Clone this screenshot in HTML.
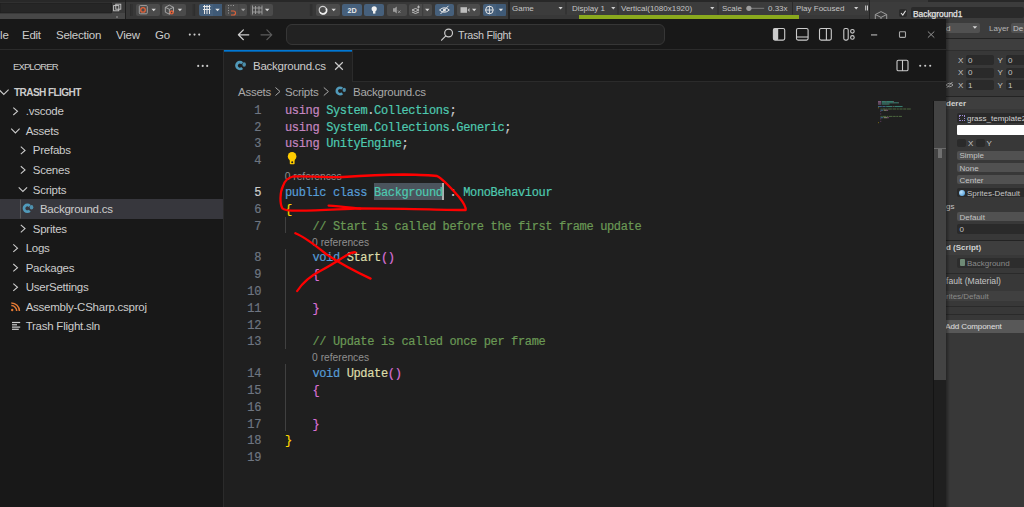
<!DOCTYPE html>
<html><head><meta charset="utf-8">
<style>
*{box-sizing:border-box;margin:0;padding:0}
html,body{width:1024px;height:507px;overflow:hidden;background:#383838;font-family:"Liberation Sans",sans-serif}
.a{position:absolute;white-space:pre}
#unity{position:absolute;left:0;top:0;width:1024px;height:507px;background:#383838}
#vs{position:absolute;left:0;top:19px;width:946px;height:488px;background:#181818;overflow:hidden}
.ui{font-size:11.5px;letter-spacing:-0.25px;line-height:14px;color:#cccccc}
.code{font-family:"Liberation Mono",monospace;font-size:12px;letter-spacing:-0.35px;-webkit-text-stroke:0.2px;line-height:16.8px;height:16.8px}
.ln{color:#6e7681;text-align:right;width:40px;left:221px}
.dim{color:#cccccc}.kw{color:#569cd6}.ctl{color:#c586c0}.ty{color:#4ec9b0}.cm{color:#6a9955}.fn{color:#dcdcaa}.pu{color:#cccccc}
.b1{color:#ffd700}.b2{color:#da70d6}
.lens{font-size:10.25px;color:#8f8f8f;font-family:"Liberation Sans",sans-serif}
.u{font-size:8px;color:#c4c4c4}
.btn{position:absolute;top:4px;height:12px;background:#4b4b4b;border-radius:2px}
.blue{background:#46607c}
.fld{position:absolute;background:#2a2a2a;border-radius:2px}
.dd{position:absolute;background:#515151;border-radius:2px}
</style></head><body>
<div id="unity">
  <!-- top toolbar -->
  <div class="a" style="left:0;top:0;width:1024px;height:2px;background:#282828"></div>
  <div class="a" style="left:0;top:2px;width:126px;height:17px;background:#3a3a3a"></div>
  <div class="a" style="left:0;top:3px;width:112px;height:10px;background:#262626"></div>
  <div class="a" style="left:0;top:13px;width:125px;height:6px;background:#474747"></div>
  <div class="a" style="left:125px;top:0;width:1px;height:19px;background:#1e1e1e"></div>
  <div class="a" style="left:126px;top:2px;width:744px;height:17px;background:#383838"></div>
  <div class="btn" style="left:136px;width:24px"></div>
  <div class="btn" style="left:162px;width:24px"></div>
  <div class="btn blue" style="left:199px;width:23px"></div>
  <div class="btn" style="left:225px;width:22px"></div>
  <div class="btn" style="left:250px;width:23px"></div>
  <div class="btn" style="left:316px;width:24px"></div>
  <div class="btn blue" style="left:342px;width:20px"></div>
  <div class="btn blue" style="left:364px;width:20px"></div>
  <div class="btn" style="left:387px;width:20px"></div>
  <div class="btn" style="left:409px;width:23px"></div>
  <div class="btn blue" style="left:435px;width:19px"></div>
  <div class="btn" style="left:457px;width:23px"></div>
  <div class="btn blue" style="left:483px;width:23px"></div>
  <div class="a" style="left:508px;top:0;width:2px;height:19px;background:#232323"></div>
  <div class="a" style="left:510px;top:2px;width:360px;height:13px;background:#3c3c3c"></div>
  <div class="a u" style="left:512px;top:4px">Game</div>
  <div class="a u" style="left:572px;top:4px">Display 1</div>
  <div class="a u" style="left:621px;top:4px">Vertical(1080x1920)</div>
  <div class="a u" style="left:722px;top:4px">Scale</div>
  <div class="a u" style="left:768px;top:4px">0.33x</div>
  <div class="a u" style="left:796px;top:4px">Play Focused</div>
  <div class="a" style="left:579px;top:15px;width:220px;height:4px;background:#8aa91d"></div>
  <!-- inspector -->
  <div class="a" style="left:870px;top:0;width:154px;height:507px;background:#383838"></div>
  <div class="a" style="left:928px;top:0;width:96px;height:2px;background:#282828"></div>
  <div class="a" style="left:870px;top:2px;width:154px;height:36px;background:#3c3c3c"></div>
  <div class="a" style="left:869px;top:0;width:1px;height:507px;background:#232323"></div>
  <div class="fld" style="left:899px;top:9px;width:8px;height:8px"></div>
  <div class="fld" style="left:911px;top:7px;width:113px;height:11px"></div>
  <div class="a u" style="left:913px;top:8.5px;color:#e4e4e4;font-size:8.4px;-webkit-text-stroke:0.25px #e4e4e4">Background1</div>
  <div class="dd" style="left:900px;top:23px;width:80px;height:10px"></div><svg class="a" style="left:972px;top:26px" width="8" height="4"><path d="M0.6 0.3 H5.2 L2.9 2.8Z" fill="#d6d6d6"/></svg>
  <div class="a u" style="left:946px;top:24px">d</div>
  <div class="a u" style="left:989px;top:24px;color:#b4b4b4">Layer</div>
  <div class="dd" style="left:1011px;top:23px;width:20px;height:10px"></div>
  <div class="a u" style="left:1013px;top:24px">De</div>
  <div class="a" style="left:870px;top:37.5px;width:154px;height:1px;background:#232323"></div>
  <div class="a" style="left:870px;top:38.5px;width:154px;height:11px;background:#3e3e3e"></div>
  <div class="a" style="left:870px;top:49.5px;width:154px;height:1px;background:#2e2e2e"></div>
  <div class="a u" style="left:958px;top:55.5px">X</div><div class="fld" style="left:966px;top:54.7px;width:28px;height:10.5px"></div><div class="a u" style="left:968px;top:55.5px">0</div>
  <div class="a u" style="left:997.5px;top:55.5px">Y</div><div class="fld" style="left:1006px;top:54.7px;width:28px;height:10.5px"></div><div class="a u" style="left:1008px;top:55.5px">0</div>
  <div class="a u" style="left:958px;top:68px">X</div><div class="fld" style="left:966px;top:67.5px;width:28px;height:10.5px"></div><div class="a u" style="left:968px;top:68px">0</div>
  <div class="a u" style="left:997.5px;top:68px">Y</div><div class="fld" style="left:1006px;top:67.5px;width:28px;height:10.5px"></div><div class="a u" style="left:1008px;top:68px">0</div>
  <div class="a u" style="left:958px;top:80.5px">X</div><div class="fld" style="left:966px;top:79.7px;width:28px;height:10.5px"></div><div class="a u" style="left:968px;top:80.5px">1</div>
  <div class="a u" style="left:997.5px;top:80.5px">Y</div><div class="fld" style="left:1006px;top:79.7px;width:28px;height:10.5px"></div><div class="a u" style="left:1008px;top:80.5px">1</div>
  <svg class="a" style="left:945px;top:81px" width="9" height="8"><path d="M1 4 Q4.5 0.5 8 4 Q4.5 7.5 1 4Z M1.5 7 L7.5 1" fill="none" stroke="#a8a8a8" stroke-width="0.9"/></svg>
  <div class="a" style="left:870px;top:95.5px;width:154px;height:1px;background:#232323"></div>
  <div class="a" style="left:870px;top:96.5px;width:154px;height:12px;background:#3e3e3e"></div>
  <div class="a u" style="left:946px;top:99px;font-weight:bold;color:#d2d2d2">derer</div>
  <div class="fld" style="left:957.3px;top:113.3px;width:70px;height:10.2px"></div>
  <div class="a" style="left:958.5px;top:115px;width:6px;height:6px;border:1px dotted #9a8ad0"></div>
  <div class="a u" style="left:967px;top:114px;color:#d2d2d2">grass_template2</div>
  <div class="a" style="left:957.3px;top:125.4px;width:70px;height:9.7px;background:#ffffff;border-radius:1px"></div>
  <div class="fld" style="left:957.3px;top:138.7px;width:8.5px;height:8.3px"></div><div class="a u" style="left:968px;top:139px">X</div>
  <div class="fld" style="left:976px;top:138.7px;width:8.5px;height:8.3px"></div><div class="a u" style="left:986.5px;top:139px">Y</div>
  <div class="dd" style="left:957.3px;top:150.5px;width:70px;height:9px"></div><div class="a u" style="left:959.5px;top:151px">Simple</div>
  <div class="dd" style="left:957.3px;top:163px;width:70px;height:9px"></div><div class="a u" style="left:959.5px;top:163.5px">None</div>
  <div class="dd" style="left:957.3px;top:175.4px;width:70px;height:9px"></div><div class="a u" style="left:959.5px;top:176px">Center</div>
  <div class="fld" style="left:957.3px;top:187.8px;width:70px;height:9.5px"></div>
  <div class="a" style="left:959px;top:189.5px;width:6px;height:6px;border-radius:3px;background:radial-gradient(circle at 35% 35%,#bfe4ff,#3a8fd0)"></div>
  <div class="a u" style="left:967px;top:188.5px">Sprites-Default</div>
  <div class="a u" style="left:946px;top:202px">gs</div>
  <div class="dd" style="left:957.3px;top:211.9px;width:70px;height:9.6px"></div><div class="a u" style="left:959.5px;top:212.5px">Default</div>
  <div class="fld" style="left:957.3px;top:224.3px;width:70px;height:9.7px"></div><div class="a u" style="left:959.5px;top:225px">0</div>
  <div class="a" style="left:870px;top:239.5px;width:154px;height:1px;background:#232323"></div>
  <div class="a" style="left:870px;top:240.5px;width:154px;height:14px;background:#3e3e3e"></div>
  <div class="a u" style="left:946px;top:242.7px;font-weight:bold;color:#d2d2d2">d (Script)</div>
  <div class="fld" style="left:957.3px;top:257.5px;width:70px;height:10px;background:#2d2d2d"></div>
  <div class="a" style="left:959.5px;top:259px;width:5.5px;height:7px;background:#6f8a76;border-radius:1px"></div>
  <div class="a u" style="left:967px;top:258.5px;color:#8a8a8a">Background</div>
  <div class="a" style="left:870px;top:272.5px;width:154px;height:1px;background:#2a2a2a"></div>
  <div class="a u" style="left:946px;top:276.3px;font-size:8.6px;color:#c4c4c4">fault (Material)</div>
  <div class="a" style="left:870px;top:290.7px;width:154px;height:10.3px;background:#404040"></div>
  <div class="a u" style="left:946px;top:291.5px;color:#8a8a8a">rites/Default</div>
  <div class="a" style="left:870px;top:306px;width:154px;height:1px;background:#2a2a2a"></div>
  <div class="a" style="left:870px;top:313.5px;width:154px;height:1px;background:#2a2a2a"></div>
  <div class="a" style="left:943px;top:320.2px;width:90px;height:12.8px;background:#585858;border-radius:3px"></div>
  <div class="a u" style="left:945.2px;top:322.2px;color:#e0e0e0;font-size:8px;letter-spacing:-0.1px">Add Component</div>
<svg class="a" style="left:0;top:0" width="1024" height="20" viewBox="0 0 1024 20"><rect x="0" y="3" width="111.5" height="10" fill="#262626" stroke="#1c1c1c" stroke-width="0.6"/><g fill="none" stroke="#c8c8c8" stroke-width="0.9"><rect x="113.6" y="5.6" width="5.2" height="5.2"/><rect x="115.8" y="4.2" width="5" height="5" /></g><circle cx="117" cy="17" r="0.7" fill="#bdbdbd"/><line x1="130.5" y1="4" x2="130.5" y2="16" stroke="#2c2c2c" stroke-width="0.8"/><line x1="132" y1="4" x2="132" y2="16" stroke="#2c2c2c" stroke-width="0.8"/><line x1="193.1" y1="4" x2="193.1" y2="16" stroke="#2c2c2c" stroke-width="0.8"/><line x1="194.6" y1="4" x2="194.6" y2="16" stroke="#2c2c2c" stroke-width="0.8"/><line x1="310.3" y1="4" x2="310.3" y2="16" stroke="#2c2c2c" stroke-width="0.8"/><line x1="311.8" y1="4" x2="311.8" y2="16" stroke="#2c2c2c" stroke-width="0.8"/><rect x="139.3" y="5.6" width="8" height="8.2" rx="1" fill="none" stroke="#a8a8a8" stroke-width="0.9"/><circle cx="143" cy="9.9" r="2.3" fill="none" stroke="#e0623a" stroke-width="1.3"/><path d="M151.50 8.80 H155.90 L153.70 11.30 Z" fill="#d6d6d6"/><g fill="none" stroke="#b0b0b0" stroke-width="0.9"><path d="M165.3 7.3 L169.4 5.2 L173.5 7.3 L173.5 12.2 L169.4 14.2 L165.3 12.2 Z M165.3 7.3 L169.4 9.3 L173.5 7.3 M169.4 9.3 V14.2"/></g><circle cx="171.7" cy="12.4" r="2.1" fill="#e0623a"/><path d="M171.1 11.4 L172.7 12.4 L171.1 13.4Z" fill="#3a3a3a"/><path d="M177.70 8.80 H182.10 L179.90 11.30 Z" fill="#d6d6d6"/><rect x="213" y="4" width="9" height="12" fill="#3f5a77"/><g stroke="#e6e6e6" stroke-width="1"><line x1="203" y1="6.5" x2="210.5" y2="6.5"/><line x1="203" y1="9.5" x2="210.5" y2="9.5"/><line x1="204.5" y1="5" x2="204.5" y2="14"/><line x1="207" y1="5" x2="207" y2="14"/><line x1="209.5" y1="5" x2="209.5" y2="14"/></g><path d="M215.30 8.80 H219.70 L217.50 11.30 Z" fill="#e6e6e6"/><g fill="#9a9a9a"><rect x="228" y="5" width="1" height="1"/><rect x="230.5" y="5" width="1" height="1"/><rect x="233" y="5" width="1" height="1"/><rect x="228" y="7.5" width="1" height="1"/><rect x="228" y="10" width="1" height="1"/><rect x="228" y="12.5" width="1" height="1"/></g><path d="M231 11 H233.5 A2 2 0 0 1 233.5 15 H231" fill="none" stroke="#e0623a" stroke-width="1.1"/><line x1="238.8" y1="4" x2="238.8" y2="16" stroke="#424242" stroke-width="0.6"/><path d="M241.00 8.80 H245.40 L243.20 11.30 Z" fill="#9c9c9c"/><g stroke="#a0a0a0" stroke-width="0.9" fill="none"><line x1="252.5" y1="5.5" x2="252.5" y2="14.5"/><line x1="262" y1="5.5" x2="262" y2="14.5"/><line x1="252.5" y1="8" x2="262" y2="8"/><line x1="252.5" y1="12" x2="262" y2="12"/><line x1="255.5" y1="6" x2="255.5" y2="14"/><line x1="259" y1="6" x2="259" y2="14"/></g><path d="M265.00 8.80 H269.40 L267.20 11.30 Z" fill="#d6d6d6"/><circle cx="322.8" cy="10" r="3.6" fill="none" stroke="#d0d0d0" stroke-width="1.2"/><path d="M320 12.2 A3.6 3.6 0 0 0 326.2 8.5" fill="none" stroke="#f0f0f0" stroke-width="1.6"/><path d="M331.50 8.80 H335.90 L333.70 11.30 Z" fill="#d6d6d6"/><text x="352" y="13" font-family="Liberation Sans" font-weight="bold" font-size="7.2" fill="#e8e8e8" text-anchor="middle">2D</text><circle cx="374.2" cy="8.8" r="2.6" fill="#f0f0f0"/><rect x="373" y="11" width="2.4" height="2.6" fill="#f0f0f0"/><path d="M393 8.2 H394.6 L396.8 6.5 V13.5 L394.6 11.8 H393Z" fill="#9c9c9c"/><path d="M398 10.5 L400.5 13 M400.5 10.5 L398 13" stroke="#9c9c9c" stroke-width="0.8"/><g fill="none" stroke="#c8c8c8" stroke-width="0.9"><path d="M412 10 L415.5 8.5 L419 10 L415.5 11.5Z"/><path d="M412 12 L415.5 13.5 L419 12"/></g><path d="M418.5 5.5 V8.5 M417 7 H420" stroke="#c8c8c8" stroke-width="0.8"/><line x1="422.7" y1="4" x2="422.7" y2="16" stroke="#383838" stroke-width="0.8"/><path d="M425.10 8.80 H429.50 L427.30 11.30 Z" fill="#d6d6d6"/><path d="M439.5 10 Q444.4 5.5 449.3 10 Q444.4 14.5 439.5 10Z" fill="none" stroke="#e8e8e8" stroke-width="1"/><circle cx="444.4" cy="10" r="1.5" fill="#e8e8e8"/><line x1="440.5" y1="14" x2="448.5" y2="5.8" stroke="#e8e8e8" stroke-width="1"/><rect x="460.5" y="7.2" width="6.5" height="5.6" fill="#bdbdbd"/><path d="M467.5 10 L469.5 8 V12Z" fill="#bdbdbd"/><path d="M472.00 8.80 H476.40 L474.20 11.30 Z" fill="#d6d6d6"/><rect x="496.2" y="4" width="9.4" height="12" fill="#3f5a77"/><circle cx="489.4" cy="10" r="3.8" fill="none" stroke="#e8e8e8" stroke-width="1"/><line x1="485.6" y1="10" x2="493.2" y2="10" stroke="#e8e8e8" stroke-width="0.9"/><line x1="489.4" y1="6.2" x2="489.4" y2="13.8" stroke="#e8e8e8" stroke-width="0.9"/><path d="M498.70 8.80 H503.10 L500.90 11.30 Z" fill="#e6e6e6"/><path d="M558.50 7.10 H562.70 L560.60 9.50 Z" fill="#cfcfcf"/><path d="M611.20 7.10 H615.40 L613.30 9.50 Z" fill="#cfcfcf"/><path d="M710.20 7.10 H714.40 L712.30 9.50 Z" fill="#cfcfcf"/><path d="M854.10 7.10 H858.30 L856.20 9.50 Z" fill="#cfcfcf"/><line x1="566" y1="2" x2="566" y2="14.5" stroke="#2a2a2a" stroke-width="1"/><line x1="618" y1="2" x2="618" y2="14.5" stroke="#2a2a2a" stroke-width="1"/><line x1="718" y1="2" x2="718" y2="14.5" stroke="#2a2a2a" stroke-width="1"/><line x1="792.5" y1="2" x2="792.5" y2="14.5" stroke="#2a2a2a" stroke-width="1"/><line x1="749" y1="8.3" x2="764.2" y2="8.3" stroke="#8a8a8a" stroke-width="0.8"/><circle cx="748.9" cy="8.3" r="2.6" fill="#9e9e9e"/><rect x="865.2" y="5.5" width="1" height="5" fill="#d0d0d0"/><rect x="867" y="5.5" width="1" height="5" fill="#d0d0d0"/><g fill="none" stroke="#9c9c9c" stroke-width="1"><path d="M875.3 14.5 L881 11.6 L886.7 14.5 L886.7 20 M875.3 14.5 V20 M875.3 14.5 L881 17.4 L886.7 14.5 M881 17.4 V20"/></g><path d="M901 13 L902.8 15 L905.6 10.8" fill="none" stroke="#e0e0e0" stroke-width="1.1"/></svg>
</div>

<div class="a" style="left:946px;top:19px;width:4px;height:488px;background:linear-gradient(90deg,rgba(0,0,0,0.35),rgba(0,0,0,0))"></div>
<div id="vs">
  <!-- title bar -->
  <div class="a" style="left:0;top:30px;width:946px;height:1px;background:#2b2b2b"></div>
  <div class="a ui" style="left:-9px;top:9px">File</div>
  <div class="a ui" style="left:22px;top:9px">Edit</div>
  <div class="a ui" style="left:56px;top:9px">Selection</div>
  <div class="a ui" style="left:116px;top:9px">View</div>
  <div class="a ui" style="left:155px;top:9px">Go</div>
  <div class="a" style="left:286px;top:5px;width:379px;height:21px;border:1px solid #363636;background:#222222;border-radius:6px"></div>
  <div class="a ui" style="left:458px;top:9px;font-size:10.8px;letter-spacing:-0.3px">Trash Flight</div>

  <!-- sidebar -->
  <div class="a" style="left:0;top:31px;width:223px;height:457px;background:#181818"></div>
  <div class="a" style="left:223px;top:31px;width:1px;height:457px;background:#2b2b2b"></div>
  <div class="a ui" style="left:13px;top:41.00px;font-size:9.6px;letter-spacing:-0.95px">EXPLORER</div>
<div class="a ui" style="left:14px;top:67.30px;font-size:10.1px;font-weight:bold;letter-spacing:-0.6px">TRASH FLIGHT</div>
<div class="a ui" style="left:25.70px;top:85.30px">.vscode</div>
<div class="a ui" style="left:25.70px;top:104.85px">Assets</div>
<div class="a ui" style="left:32.80px;top:124.40px">Prefabs</div>
<div class="a ui" style="left:32.80px;top:143.95px">Scenes</div>
<div class="a ui" style="left:32.80px;top:163.50px">Scripts</div>
<div class="a" style="left:0;top:180.25px;width:222.5px;height:19.6px;background:#37373d"></div>
<div class="a ui" style="left:39.90px;top:183.05px">Background.cs</div>
<div class="a ui" style="left:32.80px;top:202.60px">Sprites</div>
<div class="a ui" style="left:25.70px;top:222.15px">Logs</div>
<div class="a ui" style="left:25.70px;top:241.70px">Packages</div>
<div class="a ui" style="left:25.70px;top:261.25px">UserSettings</div>
<div class="a ui" style="left:25.70px;top:280.80px">Assembly-CSharp.csproj</div>
<div class="a ui" style="left:25.70px;top:300.35px">Trash Flight.sln</div>

  <!-- editor -->
  <div class="a" style="left:224px;top:31px;width:722px;height:457px;background:#1f1f1f"></div>
  <div class="a" style="left:352px;top:31px;width:594px;height:32px;background:#181818;border-bottom:1px solid #2b2b2b;border-left:1px solid #2b2b2b"></div>
  <div class="a" style="left:224px;top:31px;width:128px;height:1px;background:#0078d4"></div><div class="a" style="left:224px;top:32px;width:128px;height:1px;background:#0a5a99"></div>
  <div class="a ui" style="left:253px;top:40px">Background.cs</div>
  <div class="a ui" style="left:238px;top:66px;color:#a9a9a9">Assets</div>
  <div class="a ui" style="left:285px;top:66px;color:#a9a9a9">Scripts</div>
  <div class="a ui" style="left:353px;top:66px;color:#a9a9a9">Background.cs</div>

  <!-- scrollbar -->
  <div class="a" style="left:933px;top:82px;width:1px;height:406px;background:#141414"></div>
  <div class="a" style="left:934px;top:82px;width:12px;height:279px;background:#434343"></div>
  <div class="a" style="left:934px;top:128.5px;width:12px;height:1.6px;background:#6a6a6a"></div>
  <div class="a" style="left:938px;top:130px;width:4px;height:8.8px;background:#707070"></div>
  <div class="a" style="left:374.05px;top:164.10px;width:68.50px;height:16.8px;background:#4b545d"></div>
<div class="a" style="left:442.05px;top:164.10px;width:2px;height:16.8px;background:#aeafad"></div>
<div class="a" style="left:285.00px;top:197.70px;width:1px;height:16.80px;background:#404040"></div>
<div class="a" style="left:285.00px;top:229.50px;width:1px;height:100.80px;background:#404040"></div>
<div class="a" style="left:285.00px;top:345.30px;width:1px;height:67.20px;background:#404040"></div>
<div class="a code ln" style="top:83.70px">1</div>
<div class="a code" style="left:285.0px;top:83.70px"><span class="ctl">using</span><span class="pu"> </span><span class="ty">System</span><span class="pu">.</span><span class="ty">Collections</span><span class="pu">;</span></div>
<div class="a code ln" style="top:100.50px">2</div>
<div class="a code" style="left:285.0px;top:100.50px"><span class="ctl">using</span><span class="pu"> </span><span class="ty">System</span><span class="pu">.</span><span class="ty">Collections</span><span class="pu">.</span><span class="ty">Generic</span><span class="pu">;</span></div>
<div class="a code ln" style="top:117.30px">3</div>
<div class="a code" style="left:285.0px;top:117.30px"><span class="ctl">using</span><span class="pu"> </span><span class="ty">UnityEngine</span><span class="pu">;</span></div>
<div class="a code ln" style="top:134.10px">4</div>
<div class="a lens" style="left:284.70px;top:152.20px">0 references</div>
<div class="a code ln" style="top:165.90px;color:#cccccc">5</div>
<div class="a code" style="left:285.0px;top:165.90px"><span class="kw">public</span><span class="pu"> </span><span class="kw">class</span><span class="pu"> </span><span class="ty">Background</span><span class="pu"> </span><span class="dim">:</span><span class="pu"> </span><span class="ty">MonoBehaviour</span></div>
<div class="a code ln" style="top:182.70px">6</div>
<div class="a code" style="left:285.0px;top:182.70px"><span class="b1">{</span></div>
<div class="a code ln" style="top:199.50px">7</div>
<div class="a code" style="left:285.0px;top:199.50px"><span class="pu">    </span><span class="cm">// Start is called before the first frame update</span></div>
<div class="a lens" style="left:312.10px;top:217.60px">0 references</div>
<div class="a code ln" style="top:231.30px">8</div>
<div class="a code" style="left:285.0px;top:231.30px"><span class="pu">    </span><span class="kw">void</span><span class="pu"> </span><span class="fn">Start</span><span class="b2">()</span></div>
<div class="a code ln" style="top:248.10px">9</div>
<div class="a code" style="left:285.0px;top:248.10px"><span class="pu">    </span><span class="b2">{</span></div>
<div class="a code ln" style="top:264.90px">10</div>
<div class="a code ln" style="top:281.70px">11</div>
<div class="a code" style="left:285.0px;top:281.70px"><span class="pu">    </span><span class="b2">}</span></div>
<div class="a code ln" style="top:298.50px">12</div>
<div class="a code ln" style="top:315.30px">13</div>
<div class="a code" style="left:285.0px;top:315.30px"><span class="pu">    </span><span class="cm">// Update is called once per frame</span></div>
<div class="a lens" style="left:312.10px;top:333.40px">0 references</div>
<div class="a code ln" style="top:347.10px">14</div>
<div class="a code" style="left:285.0px;top:347.10px"><span class="pu">    </span><span class="kw">void</span><span class="pu"> </span><span class="fn">Update</span><span class="b2">()</span></div>
<div class="a code ln" style="top:363.90px">15</div>
<div class="a code" style="left:285.0px;top:363.90px"><span class="pu">    </span><span class="b2">{</span></div>
<div class="a code ln" style="top:380.70px">16</div>
<div class="a code ln" style="top:397.50px">17</div>
<div class="a code" style="left:285.0px;top:397.50px"><span class="pu">    </span><span class="b2">}</span></div>
<div class="a code ln" style="top:414.30px">18</div>
<div class="a code" style="left:285.0px;top:414.30px"><span class="b1">}</span></div>
<div class="a code ln" style="top:431.10px">19</div>
</div>

<svg class="a" style="left:0;top:0" width="1024" height="507" viewBox="0 0 1024 507"><path d="M242.19 63.18 A3.35 3.35 0 1 0 242.19 67.92" stroke="#519aba" stroke-width="2.70" fill="none"/><ellipse cx="244.15" cy="64.43" rx="1.77" ry="2.23" fill="#519aba" opacity="0.9"/><path d="M342.23 88.68 A3.20 3.20 0 1 0 342.23 93.22" stroke="#519aba" stroke-width="2.58" fill="none"/><ellipse cx="344.24" cy="89.88" rx="1.69" ry="2.14" fill="#519aba" opacity="0.9"/><path d="M29.75 205.91 A3.38 3.38 0 1 0 29.75 210.69" stroke="#519aba" stroke-width="2.73" fill="none"/><ellipse cx="31.53" cy="207.17" rx="1.79" ry="2.26" fill="#519aba" opacity="0.9"/><g fill="none" stroke="#e37933" stroke-width="1.5"><path d="M11.3 305.6 A5.4 5.4 0 0 1 16.7 311"/><path d="M11.3 302.9 A8.1 8.1 0 0 1 19.4 311"/></g><circle cx="12.2" cy="310" r="1.2" fill="#e37933"/><g stroke="#cfcfcf" stroke-width="1.2"><line x1="12" y1="322.5" x2="20.2" y2="322.5"/><line x1="12" y1="324.8" x2="17" y2="324.8"/><line x1="12" y1="327.1" x2="20.2" y2="327.1"/><line x1="12" y1="329.3" x2="18.8" y2="329.3"/></g><line x1="20.5" y1="199.5" x2="20.5" y2="218.5" stroke="#585858" stroke-width="1"/><g fill="#cccccc"><circle cx="189.8" cy="34.6" r="1.05"/><circle cx="194.5" cy="34.6" r="1.05"/><circle cx="199.2" cy="34.6" r="1.05"/></g><g fill="none" stroke-width="1.2" stroke-linecap="round" stroke-linejoin="round"><path d="M248.8 34.8 H238.4 M243.4 29.9 L238.4 34.8 L243.4 39.7" stroke="#cccccc"/><path d="M261 34.8 H271.8 M266.9 29.9 L271.8 34.8 L266.9 39.7" stroke="#5c5c5c"/></g><g fill="none" stroke="#cccccc" stroke-width="1.2"><circle cx="448.6" cy="33" r="3.9"/><line x1="445.8" y1="35.9" x2="441.6" y2="40.2" stroke-linecap="round"/></g><g fill="none" stroke="#cccccc" stroke-width="1.1"><rect x="773.4" y="28.5" width="11.3" height="11.6" rx="1.6"/><rect x="796.5" y="28.5" width="11.6" height="11.6" rx="1.6"/><line x1="796.5" y1="37" x2="808.1" y2="37"/><rect x="819.5" y="28.5" width="11.8" height="11.6" rx="1.6"/><line x1="826.4" y1="28.5" x2="826.4" y2="40.1"/><rect x="843.8" y="28.5" width="4.4" height="11.6" rx="1.6"/><circle cx="852.4" cy="31.3" r="1.8"/><circle cx="852.4" cy="37.4" r="1.8"/></g><rect x="773.4" y="28.5" width="4.8" height="11.6" rx="1" fill="#cccccc"/><line x1="871" y1="34.9" x2="877.2" y2="34.9" stroke="#9a9a9a" stroke-width="1.4"/><rect x="899.5" y="31.8" width="6" height="5.6" rx="0.8" fill="none" stroke="#a8a8a8" stroke-width="1.1"/><path d="M927.9 31.5 L934.3 37.6 M934.3 31.5 L927.9 37.6" stroke="#a0a0a0" stroke-width="0.9"/><path d="M335.1 62.3 L342.8 69.8 M342.8 62.3 L335.1 69.8" stroke="#cccccc" stroke-width="1.2"/><g fill="none" stroke="#a9a9a9" stroke-width="1"><polyline points="275.5,87.5 280,91.5 275.5,95.5"/><polyline points="323.8,87.5 328.4,91.5 323.8,95.5"/></g><rect x="897" y="60.2" width="11" height="10.6" rx="1.4" fill="none" stroke="#cccccc" stroke-width="1.1"/><line x1="902.5" y1="60.2" x2="902.5" y2="70.8" stroke="#cccccc" stroke-width="1.1"/><g fill="#cccccc"><circle cx="198.2" cy="65.9" r="1.05"/><circle cx="202.7" cy="65.9" r="1.05"/><circle cx="207.2" cy="65.9" r="1.05"/></g><g fill="#cccccc"><circle cx="920.2" cy="65.8" r="1.05"/><circle cx="925.2" cy="65.8" r="1.05"/><circle cx="930.2" cy="65.8" r="1.05"/></g></svg>
<svg class="a" style="left:0;top:0" width="1024" height="507" viewBox="0 0 1024 507">
  <!-- lightbulb -->
  <circle cx="292.1" cy="156.4" r="4.3" fill="#ffcc00"/>
  <rect x="289.8" y="159.5" width="4.8" height="4.7" rx="0.8" fill="#ffcc00"/>
  <circle cx="292.2" cy="162.2" r="1" fill="#1f1f1f"/>
  <!-- red annotations -->
  <g fill="none" stroke="#ff0000" stroke-width="2.3" stroke-linecap="round" stroke-linejoin="round">
    <path d="M465.7 210 C450 210 420 209 404 208.8 C385 208.6 370 208.4 360 208.3 C340 209 320 210.5 299 210.7 C290 210.8 284 210 282.5 208.5 C279.5 204 280 192 283 186 C284.5 181 287 178 293 176.5 C310 176.2 335 177.5 343 177 C360 175.8 385 174.6 404 174.5 C420 174.8 432 175.4 437 176 C443 179 452 189 459 197 C463 202 466 207 465.7 210"/>
    <path d="M328.6 205.6 C338 206 350 207.5 360.3 208.6"/>
    <path d="M295.4 233.3 C302 236 310 241 326 254 C338 262 350 269 370.6 278.6"/>
    <path d="M297.2 291 C303 282 310 276 322 270 C332 265 342 258 347 255 C350 253 353 252 355.4 252.3"/>
  </g>
</svg>
<svg class="a" style="left:0;top:0" width="230" height="507"><g fill="none" stroke="#cccccc" stroke-width="1.1"><polyline points="13.30,107.60 17.50,111.30 13.30,115.00"/><polyline points="11.20,128.65 15.40,132.85 19.60,128.65"/><polyline points="20.80,146.70 25.00,150.40 20.80,154.10"/><polyline points="20.80,166.25 25.00,169.95 20.80,173.65"/><polyline points="18.70,187.30 22.90,191.50 27.10,187.30"/><polyline points="20.80,224.90 25.00,228.60 20.80,232.30"/><polyline points="13.30,244.45 17.50,248.15 13.30,251.85"/><polyline points="13.30,264.00 17.50,267.70 13.30,271.40"/><polyline points="13.30,283.55 17.50,287.25 13.30,290.95"/><polyline points="-1,89.6 3.8,94.4 8.6,89.6"/></g></svg><svg class="a" style="left:0;top:0;opacity:0.55" width="1024" height="507"><rect x="878.00" y="101.00" width="3.15" height="1.1" fill="#c586c0"/><rect x="881.78" y="101.00" width="3.78" height="1.1" fill="#4ec9b0"/><rect x="885.56" y="101.00" width="0.63" height="1.1" fill="#cccccc"/><rect x="886.19" y="101.00" width="6.93" height="1.1" fill="#4ec9b0"/><rect x="893.12" y="101.00" width="0.63" height="1.1" fill="#cccccc"/><rect x="878.00" y="102.24" width="3.15" height="1.1" fill="#c586c0"/><rect x="881.78" y="102.24" width="3.78" height="1.1" fill="#4ec9b0"/><rect x="885.56" y="102.24" width="0.63" height="1.1" fill="#cccccc"/><rect x="886.19" y="102.24" width="6.93" height="1.1" fill="#4ec9b0"/><rect x="893.12" y="102.24" width="0.63" height="1.1" fill="#cccccc"/><rect x="893.75" y="102.24" width="4.41" height="1.1" fill="#4ec9b0"/><rect x="898.16" y="102.24" width="0.63" height="1.1" fill="#cccccc"/><rect x="878.00" y="103.48" width="3.15" height="1.1" fill="#c586c0"/><rect x="881.78" y="103.48" width="6.93" height="1.1" fill="#4ec9b0"/><rect x="888.71" y="103.48" width="0.63" height="1.1" fill="#cccccc"/><rect x="878.00" y="105.96" width="3.78" height="1.1" fill="#569cd6"/><rect x="882.41" y="105.96" width="3.15" height="1.1" fill="#569cd6"/><rect x="886.19" y="105.96" width="6.30" height="1.1" fill="#4ec9b0"/><rect x="893.12" y="105.96" width="0.63" height="1.1" fill="#cccccc"/><rect x="894.38" y="105.96" width="8.19" height="1.1" fill="#4ec9b0"/><rect x="878.00" y="107.20" width="0.63" height="1.1" fill="#ffd700"/><rect x="880.52" y="108.44" width="1.26" height="1.1" fill="#6a9955"/><rect x="882.41" y="108.44" width="3.15" height="1.1" fill="#6a9955"/><rect x="886.19" y="108.44" width="1.26" height="1.1" fill="#6a9955"/><rect x="888.08" y="108.44" width="3.78" height="1.1" fill="#6a9955"/><rect x="892.49" y="108.44" width="3.78" height="1.1" fill="#6a9955"/><rect x="896.90" y="108.44" width="1.89" height="1.1" fill="#6a9955"/><rect x="899.42" y="108.44" width="3.15" height="1.1" fill="#6a9955"/><rect x="903.20" y="108.44" width="3.15" height="1.1" fill="#6a9955"/><rect x="906.98" y="108.44" width="3.78" height="1.1" fill="#6a9955"/><rect x="880.52" y="109.68" width="2.52" height="1.1" fill="#569cd6"/><rect x="883.67" y="109.68" width="3.15" height="1.1" fill="#dcdcaa"/><rect x="886.82" y="109.68" width="1.26" height="1.1" fill="#da70d6"/><rect x="880.52" y="110.92" width="0.63" height="1.1" fill="#da70d6"/><rect x="880.52" y="113.40" width="0.63" height="1.1" fill="#da70d6"/><rect x="880.52" y="115.88" width="1.26" height="1.1" fill="#6a9955"/><rect x="882.41" y="115.88" width="3.78" height="1.1" fill="#6a9955"/><rect x="886.82" y="115.88" width="1.26" height="1.1" fill="#6a9955"/><rect x="888.71" y="115.88" width="3.78" height="1.1" fill="#6a9955"/><rect x="893.12" y="115.88" width="2.52" height="1.1" fill="#6a9955"/><rect x="896.27" y="115.88" width="1.89" height="1.1" fill="#6a9955"/><rect x="898.79" y="115.88" width="3.15" height="1.1" fill="#6a9955"/><rect x="880.52" y="117.12" width="2.52" height="1.1" fill="#569cd6"/><rect x="883.67" y="117.12" width="3.78" height="1.1" fill="#dcdcaa"/><rect x="887.45" y="117.12" width="1.26" height="1.1" fill="#da70d6"/><rect x="880.52" y="118.36" width="0.63" height="1.1" fill="#da70d6"/><rect x="880.52" y="120.84" width="0.63" height="1.1" fill="#da70d6"/><rect x="878.00" y="122.08" width="0.63" height="1.1" fill="#ffd700"/></svg></body></html>
